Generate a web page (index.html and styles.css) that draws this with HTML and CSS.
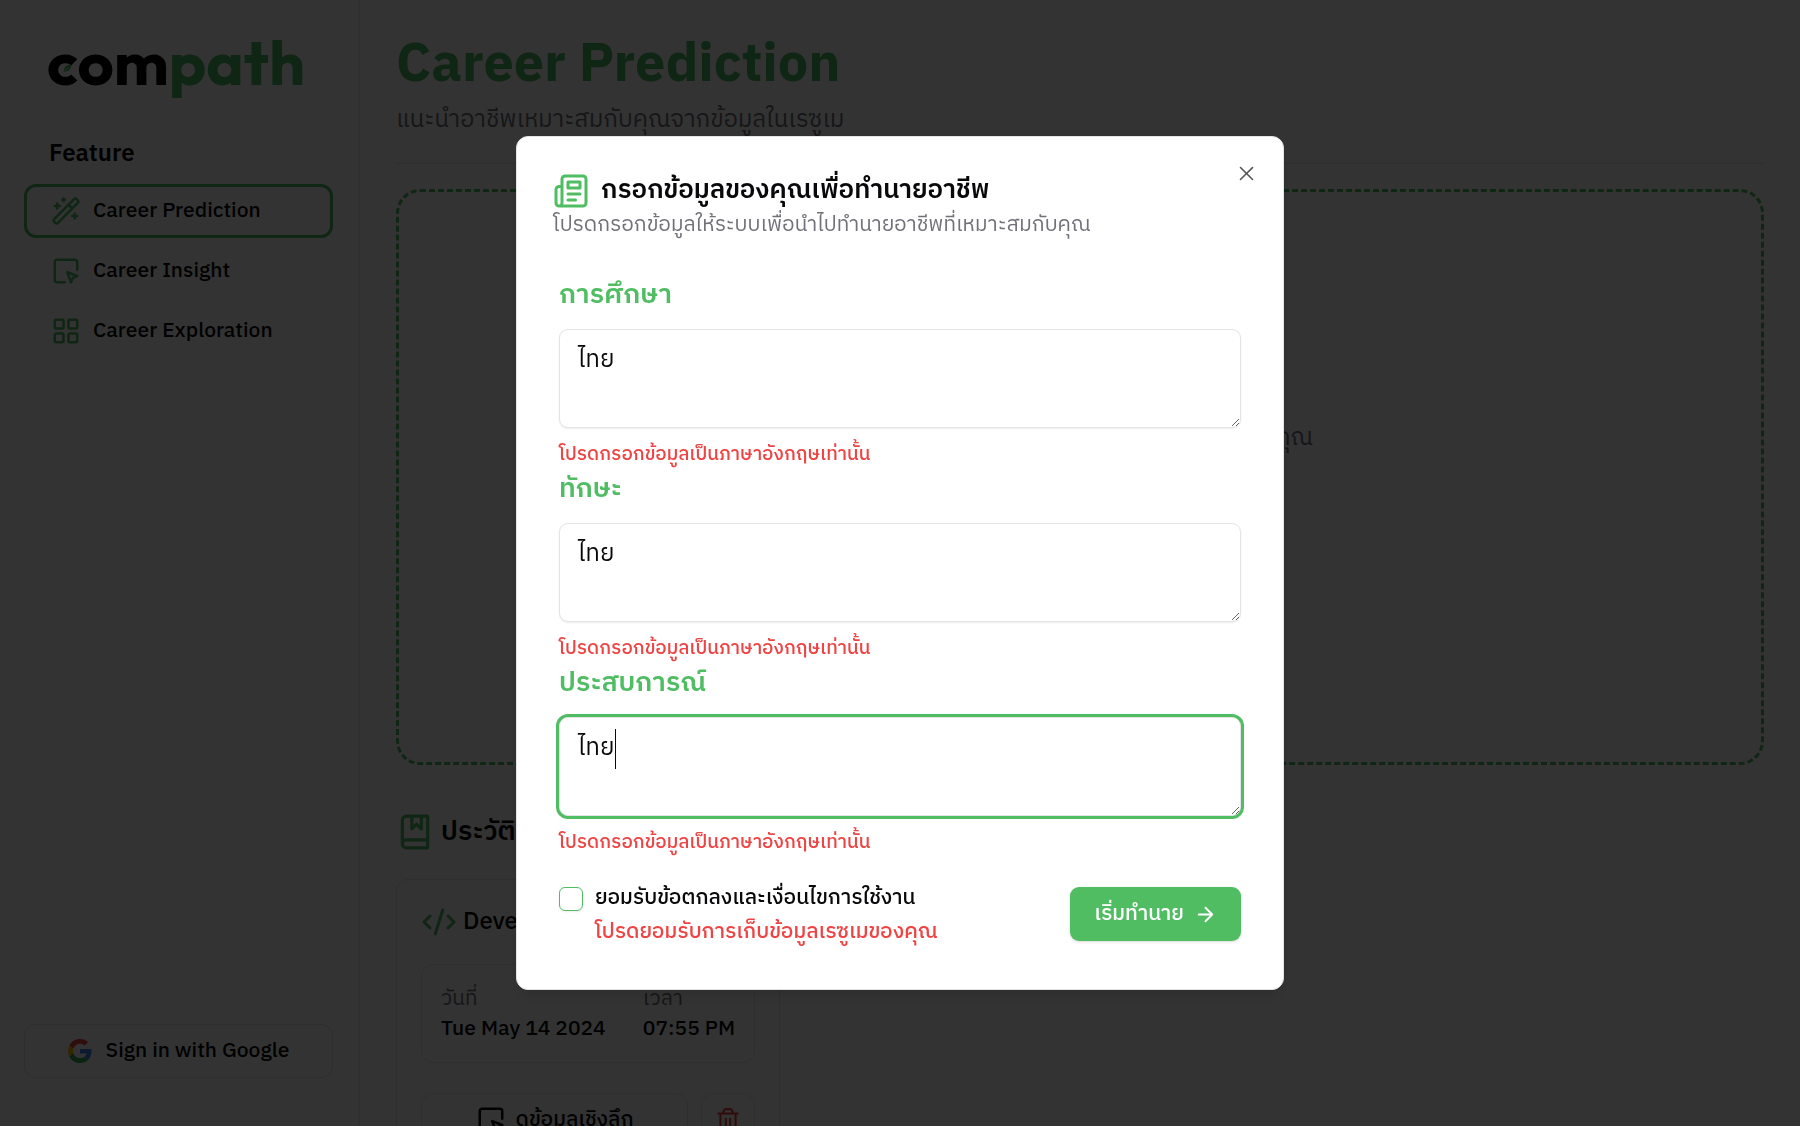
FILE: index.html
```html
<!DOCTYPE html>
<html lang="th">
<head>
<meta charset="utf-8">
<meta name="viewport" content="width=device-width, initial-scale=1">
<title>Compath – Career Prediction</title>
<link rel="stylesheet" href="styles.css">
</head>
<body>
<div class="app">
  <aside class="sidebar">
    <a class="logo" href="#" aria-label="compath">
      <span class="logo-dark">com</span><span class="logo-green">path</span>
      <svg class="logo-leaf" viewBox="0 0 10 10" aria-hidden="true"><path d="M9.500.8C5 .6 1.500 2.500 1.300 6L.5 9l1.600-.8C6 8.800 8.800 6 9.500.8z" fill="currentColor"/><path d="M1.500 8.500 6 4" stroke="#fff" stroke-width=".7"/></svg>
    </a>
    <h2 class="nav-title">Feature</h2>
    <nav class="nav">
      <a class="nav-item nav-item-active" href="#">
        <svg class="icon" viewBox="0 0 24 24"><path d="m21.640 3.640-1.280-1.280a1.210 1.210 0 0 0-1.720 0L2.360 18.640a1.210 1.210 0 0 0 0 1.720l1.280 1.280a1.200 1.200 0 0 0 1.720 0L21.640 5.360a1.200 1.200 0 0 0 0-1.720Z"/><path d="m14 7 3 3M5 6v4M19 14v4M10 2v2M7 8H3M21 16h-4M11 3H9"/></svg>
        Career Prediction
      </a>
      <a class="nav-item" href="#">
        <svg class="icon" viewBox="0 0 24 24"><path d="m13 13 8 3-3.500 1.500L16 21Z"/><path d="M11 21H5a2 2 0 0 1-2-2V5c0-1.100.9-2 2-2h14a2 2 0 0 1 2 2v6"/></svg>
        Career Insight
      </a>
      <a class="nav-item" href="#">
        <svg class="icon" viewBox="0 0 24 24"><rect width="7" height="7" x="3" y="3" rx="1"/><rect width="7" height="7" x="14" y="3" rx="1"/><rect width="7" height="7" x="14" y="14" rx="1"/><rect width="7" height="7" x="3" y="14" rx="1"/></svg>
        Career Exploration
      </a>
    </nav>
    <button class="google" type="button">
      <svg class="google-icon" viewBox="0 0 48 48"><path fill="#EA4335" d="M24 9.500c3.540 0 6.710 1.220 9.210 3.600l6.850-6.850C35.900 2.380 30.470 0 24 0 14.620 0 6.510 5.380 2.560 13.220l7.980 6.190C12.430 13.720 17.740 9.500 24 9.500z"/><path fill="#4285F4" d="M46.980 24.550c0-1.570-.15-3.090-.38-4.550H24v9.020h12.940c-.58 2.960-2.260 5.480-4.780 7.180l7.730 6c4.510-4.180 7.090-10.360 7.090-17.650z"/><path fill="#FBBC05" d="M10.530 28.590c-.48-1.450-.76-2.990-.76-4.590s.27-3.140.76-4.590l-7.980-6.190C.92 16.460 0 20.120 0 24c0 3.880.92 7.540 2.560 10.780l7.970-6.190z"/><path fill="#34A853" d="M24 48c6.480 0 11.930-2.130 15.890-5.810l-7.730-6c-2.150 1.450-4.920 2.300-8.160 2.300-6.260 0-11.570-4.220-13.470-9.910l-7.980 6.190C6.510 42.620 14.620 48 24 48z"/></svg>
      Sign in with Google
    </button>
  </aside>

  <main class="main">
    <header class="page-head">
      <h1>Career Prediction</h1>
      <p>แนะนำอาชีพเหมาะสมกับคุณจากข้อมูลในเรซูเม</p>
    </header>
    <section class="dropzone"><p>อัปโหลดเรซูเมเพื่อทำนายอาชีพที่เหมาะสมกับคุณ</p></section>
    <section class="history">
      <h2 class="history-title">
        <svg class="icon icon-book" viewBox="0 0 24 24"><path d="M4 19.500v-15A2.500 2.500 0 0 1 6.500 2H20v20H6.500a2.500 2.500 0 0 1 0-5H20"/><path d="M10 2v8l3-3 3 3V2"/></svg>
        ประวัติการทำนาย
      </h2>
      <article class="card">
        <h3 class="card-title">
          <svg class="icon icon-code" viewBox="0 0 24 24"><path d="m18 16 4-4-4-4M6 8l-4 4 4 4M14.500 4l-5 16"/></svg>
          Developer
        </h3>
        <dl class="card-meta">
          <div><dt>วันที่</dt><dd>Tue May 14 2024</dd></div>
          <div><dt>เวลา</dt><dd>07:55 PM</dd></div>
        </dl>
        <div class="card-actions">
          <button class="card-button" type="button">
            <svg class="icon icon-dark" viewBox="0 0 24 24"><path d="m13 13 8 3-3.500 1.500L16 21Z"/><path d="M11 21H5a2 2 0 0 1-2-2V5c0-1.100.9-2 2-2h14a2 2 0 0 1 2 2v6"/></svg>
            ดูข้อมูลเชิงลึก
          </button>
          <button class="card-button card-delete" type="button" aria-label="ลบ">
            <svg class="icon icon-red" viewBox="0 0 24 24"><path d="M3 6h18M19 6v14c0 1-1 2-2 2H7c-1 0-2-1-2-2V6M8 6V4c0-1 1-2 2-2h4c1 0 2 1 2 2v2M10 11v6M14 11v6"/></svg>
          </button>
        </div>
      </article>
    </section>
  </main>
</div>

<div class="overlay">
  <div class="modal" role="dialog" aria-modal="true" aria-labelledby="modal-title">
    <button class="close" type="button" aria-label="ปิด">
      <svg viewBox="0 0 15 15"><path d="M11.782 4.032a.5.5 0 1 0-.707-.707L7.500 6.793 3.925 3.218a.5.5 0 0 0-.707.707L6.793 7.500l-3.575 3.575a.5.5 0 0 0 .707.707L7.500 8.207l3.575 3.575a.5.5 0 0 0 .707-.707L8.207 7.500z" fill="currentColor"/></svg>
    </button>
    <header class="modal-head">
      <h2 id="modal-title">
        <svg class="icon icon-news" viewBox="0 0 24 24"><path d="M4 22h16a2 2 0 0 0 2-2V4a2 2 0 0 0-2-2H8a2 2 0 0 0-2 2v16a2 2 0 0 1-2 2Zm0 0a2 2 0 0 1-2-2v-9c0-1.100.9-2 2-2h2M18 14h-8M15 18h-5M10 6h8v4h-8z"/></svg>
        กรอกข้อมูลของคุณเพื่อทำนายอาชีพ
      </h2>
      <p>โปรดกรอกข้อมูลให้ระบบเพื่อนำไปทำนายอาชีพที่เหมาะสมกับคุณ</p>
    </header>
    <form class="form">
      <div class="field">
        <label for="education">การศึกษา</label>
        <textarea id="education">ไทย</textarea>
        <p class="error">โปรดกรอกข้อมูลเป็นภาษาอังกฤษเท่านั้น</p>
      </div>
      <div class="field">
        <label for="skills">ทักษะ</label>
        <textarea id="skills">ไทย</textarea>
        <p class="error">โปรดกรอกข้อมูลเป็นภาษาอังกฤษเท่านั้น</p>
      </div>
      <div class="field">
        <label for="experience">ประสบการณ์</label>
        <div class="editing">
          <textarea id="experience">ไทย</textarea>
          <span class="caret"></span>
        </div>
        <p class="error">โปรดกรอกข้อมูลเป็นภาษาอังกฤษเท่านั้น</p>
      </div>
      <div class="form-foot">
        <input id="terms" type="checkbox">
        <div class="terms">
          <label for="terms">ยอมรับข้อตกลงและเงื่อนไขการใช้งาน</label>
          <p>โปรดยอมรับการเก็บข้อมูลเรซูเมของคุณ</p>
        </div>
        <button class="submit" type="submit">
          เริ่มทำนาย
          <svg class="icon icon-arrow" viewBox="0 0 24 24"><path d="M5 12h14M12 5l7 7-7 7"/></svg>
        </button>
      </div>
    </form>
  </div>
</div>
</body>
</html>
```
FILE: styles.css
```css
:root {
  --green: #50bd63;
  --text: #09090b;
  --muted: #71717a;
  --line: #e4e4e7;
  --divider: #f0f0f2;
  --red: #ef4444;
}

* { box-sizing: border-box; }

body {
  margin: 0;
  background: #fff;
  color: var(--text);
  font: 400 21px/30px "IBM Plex Sans Thai", Roboto, "Noto Sans Thai", sans-serif;
}

h1, h2, h3, p, dl, dd { margin: 0; }
a { color: inherit; text-decoration: none; }
button, textarea { font: inherit; color: inherit; }

.icon {
  flex: none;
  width: 30px;
  height: 30px;
  fill: none;
  stroke: var(--green);
  stroke-width: 2;
  stroke-linecap: round;
  stroke-linejoin: round;
}

.app { display: flex; height: 100vh; overflow: hidden; }

.sidebar {
  display: flex;
  flex: none;
  flex-direction: column;
  width: 360px;
  padding: 26px 25px 48px 24px;
  border-right: 2px solid var(--divider);
}

.logo {
  position: relative;
  display: flex;
  height: 76px;
  margin-left: 23px;
  font: 700 63px/72px Gilroy, Outfit, "Plus Jakarta Sans", Poppins, Montserrat, Lato, sans-serif;
}
.logo-dark { color: #000; }
.logo-green, .logo-leaf { color: var(--green); }
.logo-leaf { position: absolute; left: 16px; top: 38px; width: 9px; height: 9px; }

.nav-title { margin: 37px 0 15px 25px; font-size: 24px; font-weight: 600; }

.nav { display: grid; gap: 6px; }
.nav-item {
  display: flex;
  align-items: center;
  gap: 12px;
  height: 54px;
  padding: 0 24px;
  border: 3px solid transparent;
  border-radius: 12px;
  font-weight: 500;
}
.nav-item-active { border-color: var(--green); }

.google {
  display: flex;
  align-items: center;
  justify-content: center;
  gap: 14px;
  height: 54px;
  margin-top: auto;
  border: 1px solid var(--line);
  border-radius: 12px;
  background: #fff;
  font-weight: 500;
}
.google-icon { width: 24px; height: 24px; }

.main { flex: 1; min-width: 0; padding: 36px 36px 0; }

.page-head { padding-bottom: 24px; border-bottom: 2px solid var(--divider); }
.page-head h1 { color: var(--green); font-size: 54px; line-height: 60px; font-weight: 700; }
.page-head p { margin-top: 6px; font-size: 24px; line-height: 36px; color: var(--muted); }

.dropzone {
  display: grid;
  place-items: center;
  height: 576px;
  margin-top: 25px;
  padding-bottom: 78px;
  border: 3px dashed var(--green);
  border-radius: 24px;
  color: var(--muted);
  font-size: 24px;
}

.history { padding-top: 48px; }
.history-title { display: flex; align-items: center; gap: 7px; font-size: 27px; line-height: 36px; font-weight: 600; }
.icon-book { width: 38px; height: 38px; }

.card { width: 384px; margin-top: 28px; padding: 24px; border: 1px solid var(--line); border-radius: 12px; }
.card-title { display: flex; align-items: center; gap: 6px; font-size: 24px; line-height: 36px; font-weight: 500; }
.icon-code { width: 36px; height: 36px; }
.card-meta {
  display: flex;
  justify-content: space-between;
  height: 99px;
  margin-top: 24px;
  padding: 19px 19px 0;
  border: 1px solid var(--line);
  border-radius: 12px;
}
.card-meta dt { color: var(--muted); }
.card-meta dd { font-weight: 500; }
.card-actions { display: flex; gap: 13px; margin-top: 30px; }
.card-button {
  display: flex;
  flex: 1;
  align-items: center;
  justify-content: center;
  gap: 10px;
  height: 54px;
  padding: 0;
  border: 1px solid var(--line);
  border-radius: 12px;
  background: #fff;
  font-weight: 500;
}
.card-delete { flex: 0 0 54px; }
.icon-dark { stroke: var(--text); }
.icon-red { stroke: var(--red); width: 26px; height: 26px; }

.overlay {
  position: fixed;
  inset: 0;
  display: grid;
  place-items: center;
  background: rgb(0 0 0 / 80%);
}

.modal {
  position: relative;
  width: min(768px, 100%);
  padding: 34px 36px 40px;
  border: 1px solid var(--line);
  border-radius: 12px;
  background: #fff;
  box-shadow: 0 10px 15px -3px rgb(0 0 0 / 10%), 0 4px 6px -4px rgb(0 0 0 / 10%);
}

.close {
  position: absolute;
  top: 25px;
  right: 25px;
  display: flex;
  padding: 0;
  border: 0;
  background: none;
  opacity: .7;
}
.close svg { width: 23px; height: 23px; }

.modal-head h2 { display: flex; align-items: center; gap: 12px; font-size: 26px; line-height: 36px; font-weight: 600; }
.icon-news { width: 36px; height: 40px; }
.modal-head p { color: var(--muted); line-height: 28px; }

.form { padding: 37px 6px 0; }
.field { height: 194px; }
.field label { display: block; height: 53px; color: var(--green); font-size: 27px; line-height: 38px; font-weight: 600; }
.field textarea {
  display: block;
  width: 100%;
  height: 99px;
  padding: 12px 18px;
  border: 1px solid var(--line);
  border-radius: 9px;
  outline: 0;
  background: #fff;
  box-shadow: 0 1px 2px rgb(0 0 0 / 8%);
  font-size: 24px;
  line-height: 36px;
}
.editing { position: relative; }
.field .editing textarea { box-shadow: 0 0 0 3px var(--green); }
.caret { position: absolute; left: 56px; top: 12px; width: 1px; height: 40px; background: var(--text); }
.error { margin-top: 12px; color: var(--red); font-size: 19px; font-weight: 500; }

.form-foot { display: flex; align-items: flex-start; gap: 12px; padding-top: 29px; }
.form-foot input {
  appearance: none;
  flex: none;
  width: 24px;
  height: 24px;
  margin: 0;
  border: 1px solid var(--green);
  border-radius: 6px;
  box-shadow: 0 1px 2px rgb(0 0 0 / 8%);
}
.terms { flex: 1; font-weight: 500; line-height: 34px; margin-top: -6px; }
.terms p { color: var(--red); }
.submit {
  display: flex;
  align-items: center;
  justify-content: center;
  gap: 10px;
  width: 171px;
  height: 54px;
  padding: 0;
  border: 0;
  border-radius: 9px;
  background: var(--green);
  box-shadow: 0 1px 3px rgb(0 0 0 / 15%);
  color: #fff;
  font-weight: 500;
}
.icon-arrow { width: 23px; height: 23px; stroke: #fff; }
```
